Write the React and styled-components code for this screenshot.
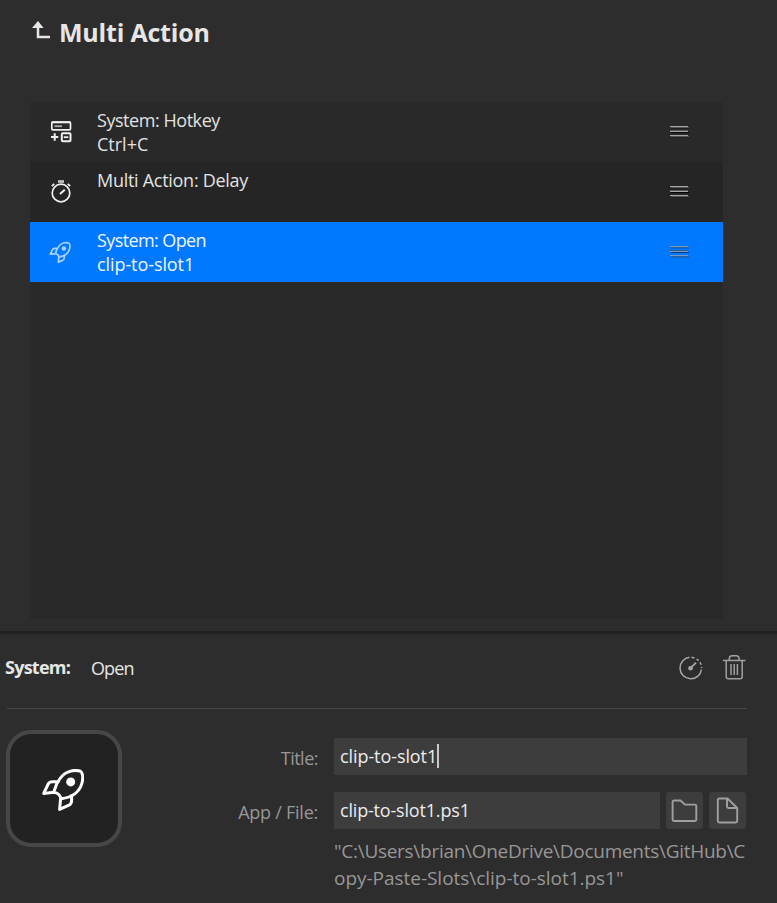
import React from "react";
import styled, { createGlobalStyle } from "styled-components";

const GlobalStyle = createGlobalStyle`
  *, *::before, *::after { box-sizing: border-box; }
  body { margin: 0; background: #2d2d2d; font-family: "Open Sans", "Noto Sans", sans-serif; }
`;

const Window = styled.main`
  width: 777px;
  height: 903px;
  overflow: hidden;
  display: flex;
  flex-direction: column;
  background: #2d2d2d;
  color: #e6e6e6;
`;

const Header = styled.header`
  display: flex;
  align-items: flex-start;
  height: 102px;
  padding: 14px 0 0 31px;

  svg { margin: 6px 8px 0 0; }
`;

const Heading = styled.h1`
  margin: 0;
  font-size: 25px;
  line-height: 36px;
  font-weight: 700;
  letter-spacing: -0.2px;
  white-space: nowrap;
`;

const ActionList = styled.section`
  width: 693px;
  height: 517px;
  margin-left: 30px;
  background: #292929;
`;

const ActionRow = styled.div`
  display: flex;
  height: 60px;
  padding-right: 33px;
  background: ${(p) => (p.$selected ? "#0078ff" : p.$alternate ? "#252525" : "#292929")};
  color: ${(p) => (p.$selected ? "#f0f6ff" : "#e2e2e2")};
`;

const RowIcon = styled.div`
  width: 67px;
  padding: ${(p) => (p.$selected ? 18 : 17)}px 0 0 18px;
  color: ${(p) => (p.$selected ? "#a9d2ff" : "#f0f0f0")};

  svg { display: block; }
`;

const RowText = styled.div`
  flex: 1;
  padding-top: 6px;
`;

const Label = styled.div`
  font-size: ${(p) => p.$size || 18}px;
  line-height: ${(p) => p.$line || 24}px;
  font-weight: ${(p) => p.$weight || 400};
  letter-spacing: ${(p) => p.$track || 0}px;
  white-space: nowrap;
`;

const Handle = styled.div`
  padding-top: 24px;

  svg { display: block; }
`;

const Splitter = styled.div`
  height: 3px;
  margin-top: 12px;
  background: #222222;
`;

const Inspector = styled.section`
  flex: 1;
  padding: 0 30px 0 6px;
`;

const InspectorHeader = styled.div`
  display: flex;
  align-items: flex-start;
  height: 75px;
  padding-top: 22px;
  margin-left: 1px;
  border-bottom: 1px solid #484848;
`;

const Category = styled.div`
  width: 86px;
  margin-left: -2px;
  margin-top: -1px;
`;

const ActionName = styled.div`
  flex: 1;
`;

const Tools = styled.div`
  display: flex;
  gap: 17px;
  margin-top: -2px;

  svg { display: block; }
`;

const Settings = styled.div`
  display: flex;
  padding-top: 21px;
`;

const KeyPreview = styled.div`
  display: grid;
  flex: none;
  place-items: center;
  width: 116px;
  height: 117px;
  padding: 2px 2px 0 0;
  border: 4px solid #474747;
  border-radius: 25px;
  background: #222222;
  color: #ffffff;
`;

const Form = styled.div`
  flex: 1;
  min-width: 0;
  padding-top: 8px;
`;

const Field = styled.div`
  display: flex;
  height: 37px;
  margin-bottom: ${(p) => p.$gap || 0}px;
  padding-right: ${(p) => (p.$withButtons ? 1 : 0)}px;
`;

const FieldName = styled.div`
  display: flex;
  justify-content: flex-end;
  flex: none;
  width: 196px;
  padding-top: 8px;
  margin-right: 16px;
  color: #979797;
`;

const TextBox = styled.div`
  flex: 1;
  display: flex;
  padding: 6px 0 0 6px;
  background: #3d3d3d;
  color: #ececec;
`;

const Caret = styled.span`
  width: 2px;
  height: 24px;
  background: #c8c8c8;
`;

const FileButton = styled.button`
  display: grid;
  place-items: center;
  width: 37px;
  height: 37px;
  margin: 0 0 0 6px;
  padding: 0;
  border: 0;
  border-radius: 3px;
  background: #3d3d3d;
  color: #a0a0a0;

  svg { display: block; }
`;

const FilePath = styled.div`
  padding: 9px 0 0 212px;
  color: #979797;
`;

const BackIcon = () => (
  <svg width="20" height="20" viewBox="0 0 20 20" fill="none">
    <path d="M7 6V17H19" stroke="#e6e6e6" strokeWidth="2.5" />
    <path d="M7 1L12.6 7.9H1Z" fill="#e6e6e6" />
  </svg>
);

const HotkeyIcon = () => (
  <svg width="26" height="26" viewBox="0 0 26 26" fill="none" stroke="currentColor">
    <rect x="3.8" y="3" width="18.7" height="7.8" rx="1" strokeWidth="1.7" />
    <path d="M3.8 3.3H22.5" strokeWidth="2" />
    <path d="M6.5 7.2H14" strokeWidth="1.8" opacity=".65" />
    <path d="M3 18H10.3M6.7 14.2V21.8" strokeWidth="2" />
    <rect x="13.8" y="14.3" width="8.7" height="8" rx="1" strokeWidth="2" />
    <path d="M15.8 18.2H20.3" strokeWidth="1.8" />
  </svg>
);

const TimerIcon = () => (
  <svg width="26" height="26" viewBox="0 0 26 26" fill="none" stroke="currentColor">
    <circle cx="13" cy="14" r="8.8" strokeWidth="1.7" />
    <path d="M10 2.5H16" strokeWidth="2.8" opacity=".75" />
    <path d="M12 15L16.8 10.7" strokeWidth="2" />
    <path d="M3.9 7.2L6.2 4.9M22.1 7.2L19.8 4.9" strokeWidth="1.8" />
  </svg>
);

const RocketIcon = ({ width = 42, height = 42, viewBox = "0 0 42 42", stroke = 3 }) => (
  <svg width={width} height={height} viewBox={viewBox} fill="none" stroke="currentColor" strokeWidth={stroke} strokeLinejoin="round" strokeLinecap="round">
    <path d="M16 13C20 4.5 28.5 -.2 38 2C41.2 3.4 41.1 9.7 40 14C37.8 22 31.5 28.2 19.3 29.7C18 26.2 15.2 23.7 11.7 23.3L1.7 24.4L6.2 15Q7.4 12.7 10.4 12.7H15.5L11.7 23.3" />
    <path d="M18.6 29.7L17.6 40.4L27 36.2Q29.6 34.7 29.6 31.5V26.7" />
    <circle cx="28.7" cy="12.9" r="4.5" fill="currentColor" stroke="none" />
  </svg>
);

const GripIcon = ({ selected }) => (
  <svg width="20" height="13" viewBox="0 0 20 13" shapeRendering="crispEdges">
    <path d="M1 1.5H19M1 10.5H19M0 4.5H18" stroke={selected ? "#2860a0" : "#555555"} />
    <path d="M1 6.5H19" stroke={selected ? "#073c79" : "#060606"} />
    <path d="M1 2.5H19M1 11.5H19" stroke={selected ? "#0869d8" : "#202020"} />
    <path d="M0 .5H18M0 5.5H18M0 9.5H18" stroke={selected ? "#7898ba" : "#a5a5a5"} />
  </svg>
);

const GaugeIcon = () => (
  <svg width="26" height="28" viewBox="0 0 26 28" fill="none" stroke="#a8a8a8" strokeWidth="1.5">
    <path d="M11.5 3.3A10.8 10.8 0 1 0 23.5 15.5" />
    <path d="M13.5 3.3L16.5 3.9M18.7 5L20.6 6.6M22 8.3L23.2 10.8M23.6 13V14" />
    <path d="M12.5 14.2L18 8.6" strokeWidth="1.8" />
    <circle cx="12.5" cy="14.2" r="2.3" fill="#a8a8a8" stroke="none" />
  </svg>
);

const TrashIcon = () => (
  <svg width="26" height="28" viewBox="0 0 26 28" fill="none" stroke="#a0a0a0" strokeWidth="1.5">
    <path d="M2 6.5H24.5M8.3 6V4.7Q8.3 1.7 11.2 1.7H15.3Q18 1.7 18 4.7V6M5.2 7V22.8Q5.2 24.8 7.2 24.8H19.2Q21.2 24.8 21.2 22.8V7" />
    <path d="M10 10V21M13.2 10V21M16.4 10V21" />
  </svg>
);

const FolderIcon = () => (
  <svg width="27" height="24" viewBox="0 0 27 24" fill="none" stroke="currentColor" strokeWidth="1.9" strokeLinejoin="round">
    <path d="M1.6 3Q1.6 1.5 3.1 1.5H9.5L14 5.6H23.8Q25.3 5.6 25.3 7.1V20.5Q25.3 22 23.8 22H3.1Q1.6 22 1.6 20.5Z" />
  </svg>
);

const DocumentIcon = () => (
  <svg width="23" height="27" viewBox="0 0 23 27" fill="none" stroke="currentColor" strokeWidth="1.9" strokeLinejoin="round">
    <path d="M11.5 1.5H3.3Q1.8 1.5 1.8 3V24Q1.8 25.5 3.3 25.5H19.7Q21.2 25.5 21.2 24V11ZM11 1.5V9.5Q11 11 12.5 11H21.2" />
  </svg>
);

export default function App() {
  return (
    <>
      <GlobalStyle />
      <Window>
        <Header>
          <BackIcon />
          <Heading>Multi Action</Heading>
        </Header>
        <ActionList>
          <ActionRow>
            <RowIcon><HotkeyIcon /></RowIcon>
            <RowText>
              <Label $track={-0.45}>System: Hotkey</Label>
              <Label>Ctrl+C</Label>
            </RowText>
            <Handle><GripIcon /></Handle>
          </ActionRow>
          <ActionRow $alternate>
            <RowIcon><TimerIcon /></RowIcon>
            <RowText><Label $track={-0.28}>Multi Action: Delay</Label></RowText>
            <Handle><GripIcon /></Handle>
          </ActionRow>
          <ActionRow $selected>
            <RowIcon $selected><RocketIcon width={26} height={26} viewBox="-3 -4 52 52" stroke={3.4} /></RowIcon>
            <RowText>
              <Label $track={-0.6}>System: Open</Label>
              <Label $track={-0.08}>clip-to-slot1</Label>
            </RowText>
            <Handle><GripIcon selected /></Handle>
          </ActionRow>
        </ActionList>
        <Splitter />
        <Inspector>
          <InspectorHeader>
            <Category><Label $weight={700} $track={-0.75}>System:</Label></Category>
            <ActionName><Label $track={-0.9}>Open</Label></ActionName>
            <Tools><GaugeIcon /><TrashIcon /></Tools>
          </InspectorHeader>
          <Settings>
            <KeyPreview><RocketIcon /></KeyPreview>
            <Form>
              <Field $gap={17}>
                <FieldName><Label $track={-0.5}>Title:</Label></FieldName>
                <TextBox><Label $track={-0.08}>clip-to-slot1</Label><Caret /></TextBox>
              </Field>
              <Field $withButtons>
                <FieldName><Label $track={-0.25}>App / File:</Label></FieldName>
                <TextBox><Label $track={-0.18}>clip-to-slot1.ps1</Label></TextBox>
                <FileButton aria-label="Choose folder"><FolderIcon /></FileButton>
                <FileButton aria-label="Choose file"><DocumentIcon /></FileButton>
              </Field>
              <FilePath>
                <Label $size={19} $line={27} $track={-0.28}>"C:\Users\brian\OneDrive\Documents\GitHub\C</Label>
                <Label $size={19} $line={27} $track={-0.03}>opy-Paste-Slots\clip-to-slot1.ps1"</Label>
              </FilePath>
            </Form>
          </Settings>
        </Inspector>
      </Window>
    </>
  );
}
